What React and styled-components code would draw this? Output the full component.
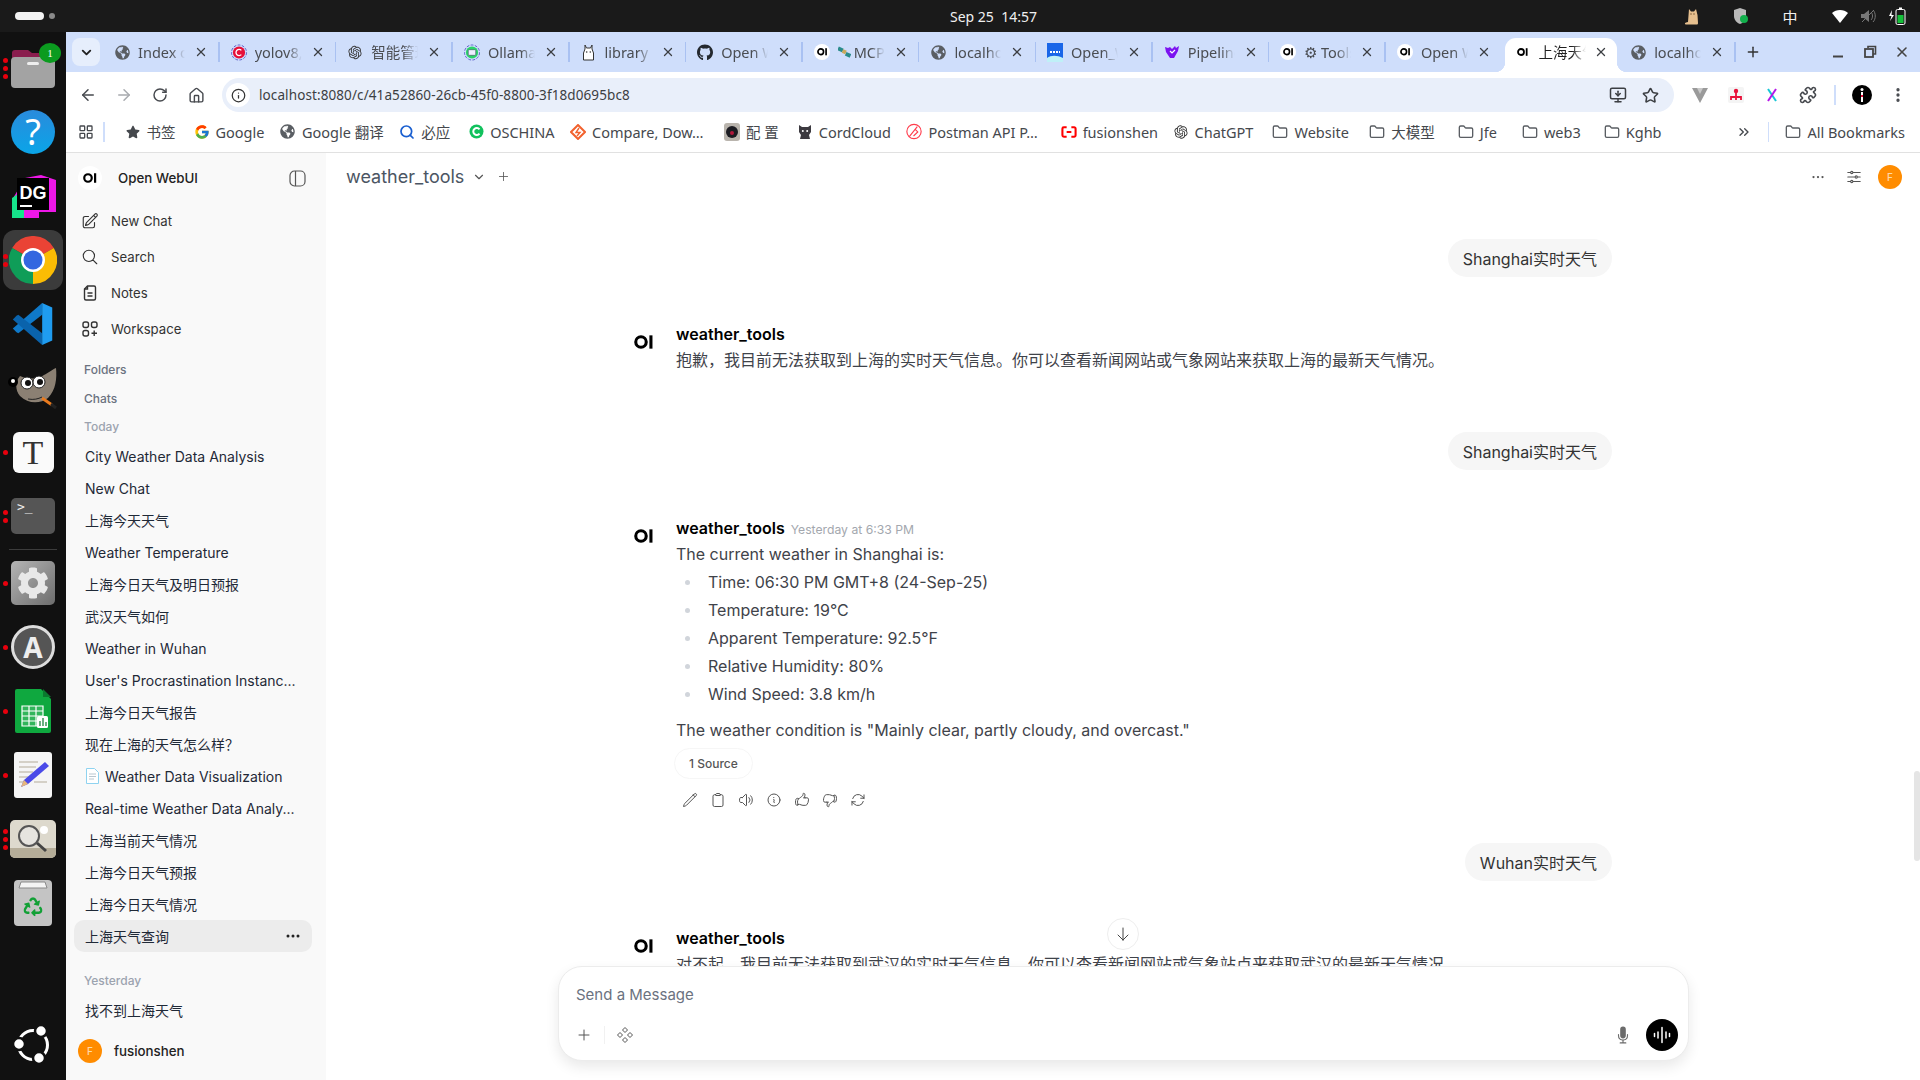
import styled, { createGlobalStyle } from 'styled-components';
import {
  ArrowLeft, ArrowRight, RotateCw, Home, Info, Star, X, Plus, Folder, LayoutGrid,
  MonitorDown, Puzzle, EllipsisVertical, ChevronDown, ChevronsRight, Search as SearchGlyph,
} from 'lucide-react';
import {
  HiOutlinePencilSquare, HiOutlineMagnifyingGlass, HiOutlinePencil, HiOutlineClipboard,
  HiOutlineSpeakerWave, HiOutlineInformationCircle, HiOutlineHandThumbUp, HiOutlineHandThumbDown,
  HiOutlineArrowPath, HiOutlineArrowDown, HiOutlineAdjustmentsHorizontal, HiEllipsisHorizontal,
  HiMicrophone, HiOutlinePlus,
} from 'react-icons/hi2';
import { FaGlobeAmericas, FaGithub, FaCog, FaRecycle, FaStar } from 'react-icons/fa';
import { FcGoogle } from 'react-icons/fc';
import { RiOpenaiFill } from 'react-icons/ri';

const chromeFont = `"Noto Sans", "Noto Sans CJK SC", sans-serif`;
const webFont = `Inter, "Noto Sans CJK SC", sans-serif`;

const GlobalStyle = createGlobalStyle`
  html, body { margin: 0; padding: 0; height: 100%; overflow: hidden; background: #111; }
  #root { height: 100%; }
  * { box-sizing: border-box; }
`;

const Desktop = styled.div`
  width: 1920px;
  height: 1080px;
  display: flex;
  flex-direction: column;
  overflow: hidden;
`;

/* gnome top bar */
const TopBar = styled.header`
  height: 32px;
  flex: none;
  background: #1a1a1a;
  display: grid;
  grid-template-columns: 950px auto 1fr;
  align-items: center;
  font-family: ${chromeFont};
  color: #f0f0f0;
`;
const Activities = styled.div`
  display: flex;
  align-items: center;
  gap: 5px;
  padding-left: 15px;
`;
const ActivityPill = styled.span`
  width: 29px;
  height: 8px;
  border-radius: 4px;
  background: #f2f2f2;
`;
const ActivityDot = styled.span`
  width: 6px;
  height: 6px;
  border-radius: 50%;
  background: #8a8a8a;
`;
const Clock = styled.div`
  font-size: 14px;
  white-space: pre;
`;
const Tray = styled.div`
  display: flex;
  align-items: center;
  justify-content: flex-end;
  padding-right: 10px;
`;
const TraySlot = styled.span`
  width: ${({ $w }) => $w}px;
  display: flex;
  justify-content: center;
  align-items: center;
  font-size: 15px;
  font-family: "Noto Sans CJK SC", sans-serif;
`;

const Body = styled.div`
  flex: 1;
  min-height: 0;
  display: flex;
`;

/* ubuntu dock */
const Dock = styled.nav`
  width: 66px;
  flex: none;
  background: #111;
  display: flex;
  flex-direction: column;
  padding: 4px 0 3px;
`;
const DockSlot = styled.div`
  position: relative;
  height: 64px;
  flex: none;
  display: flex;
  align-items: center;
  justify-content: center;
  margin-top: ${({ $bottom }) => ($bottom ? 'auto' : '0')};
`;
const DockActive = styled.div`
  width: 60px;
  height: 60px;
  border-radius: 12px;
  background: #3b3b3b;
  display: flex;
  align-items: center;
  justify-content: center;
`;
const DockDots = styled.div`
  position: absolute;
  left: 3px;
  top: 0;
  bottom: 0;
  display: flex;
  flex-direction: column;
  justify-content: center;
  gap: 3px;
`;
const DockDot = styled.span`
  width: 5px;
  height: 5px;
  border-radius: 50%;
  background: #e8000d;
`;
const DockRule = styled.div`
  height: 1px;
  margin: 1px 9px 1px;
  flex: none;
  background: #3c3c3c;
`;
const HelpIcon = styled.div`
  width: 44px;
  height: 44px;
  border-radius: 50%;
  background: linear-gradient(#2a8bdc, #0aa5e8);
  color: #fff;
  font: 400 36px/44px ${chromeFont};
  text-align: center;
`;
const TypeIcon = styled.div`
  width: 41px;
  height: 41px;
  border-radius: 6px;
  background: #fafafa;
  color: #333;
  font: 400 34px/41px "Liberation Serif", serif;
  text-align: center;
`;
const TerminalIcon = styled.div`
  width: 44px;
  height: 36px;
  border-radius: 5px;
  background: #555;
  color: #eee;
  padding: 1px 6px;
  font: 400 13px/16px "DejaVu Sans Mono", monospace;
`;
const SettingsIcon = styled.div`
  width: 44px;
  height: 44px;
  border-radius: 5px;
  background: linear-gradient(135deg, #b5b5b5, #6d6d6d);
  color: #e8e8e8;
  display: flex;
  align-items: center;
  justify-content: center;
`;
const UpdateIcon = styled.div`
  width: 44px;
  height: 44px;
  border-radius: 50%;
  border: 3px solid #ddd;
  background: #555;
  color: #eee;
  font: 700 28px/38px ${chromeFont};
  text-align: center;
`;

/* browser frame */
const Browser = styled.div`
  flex: 1;
  min-width: 0;
  display: flex;
  flex-direction: column;
  font-family: ${chromeFont};
  background: #fff;
`;
const TabStrip = styled.div`
  height: 40px;
  flex: none;
  background: #cfdefb;
  display: flex;
  align-items: flex-end;
  padding: 0 10px 0 6px;
`;
const TabListBtn = styled.div`
  width: 28px;
  height: 28px;
  margin: 0 3px 6px 0;
  border-radius: 8px;
  background: #e6eefc;
  display: flex;
  align-items: center;
  justify-content: center;
  color: #222;
`;
const TabRow = styled.div`
  display: flex;
  width: 1633px;
  flex: none;
`;
const TabItem = styled.div`
  position: relative;
  flex: none;
  width: ${({ $active }) => ($active ? '112.64px' : '116.64px')};
  height: 34px;
  display: flex;
  align-items: center;
  padding: 0 0 6px ${({ $active }) => ($active ? '10px' : '11px')};
  color: ${({ $active }) => ($active ? '#1f1f1f' : '#4a4d52')};
  background: ${({ $active }) => ($active ? '#fff' : 'transparent')};
  border-radius: ${({ $active }) => ($active ? '11px 11px 0 0' : '0')};
  margin: ${({ $active }) => ($active ? '0 2px' : '0')};
  &::after {
    content: '';
    position: absolute;
    right: 0;
    top: 4px;
    height: 20px;
    width: 1.5px;
    background: ${({ $sep }) => ($sep ? '#a9c1f2' : 'transparent')};
  }
  ${({ $active }) => $active && `
    &::before {
      content: '';
      position: absolute;
      left: -10px;
      bottom: 0;
      width: 10px;
      height: 10px;
      background: radial-gradient(circle at 0 0, transparent 10px, #fff 10.5px);
    }
    &::after {
      right: -10px;
      top: auto;
      bottom: 0;
      width: 10px;
      height: 10px;
      background: radial-gradient(circle at 100% 0, transparent 10px, #fff 10.5px);
    }
  `}
`;
const TabIconBox = styled.span`
  width: 16px;
  height: 16px;
  flex: none;
  display: flex;
  align-items: center;
  justify-content: center;
  color: #3c3f43;
`;
const TabTitle = styled.span`
  width: 47px;
  margin-left: 8px;
  flex: none;
  overflow: hidden;
  white-space: nowrap;
  font-size: 14.5px;
  line-height: 20px;
  display: flex;
  align-items: center;
  gap: 3px;
  -webkit-mask-image: linear-gradient(90deg, #000 70%, transparent 100%);
  mask-image: linear-gradient(90deg, #000 70%, transparent 100%);
`;
const TabClose = styled.span`
  position: absolute;
  left: ${({ $active }) => ($active ? '89px' : '91px')};
  top: 7px;
  display: flex;
  color: #3c3f43;
`;
const NewTab = styled.div`
  margin: 0 0 12px 9px;
  color: #333;
  display: flex;
`;
const WindowControls = styled.div`
  margin: 0 0 12px auto;
  display: flex;
  gap: 16px;
  color: #444;
`;

const Toolbar = styled.div`
  height: 40px;
  flex: none;
  display: flex;
  align-items: flex-end;
  padding: 0 4px;
  background: #fff;
`;
const ToolBtn = styled.div`
  width: 36px;
  height: 34px;
  flex: none;
  display: flex;
  align-items: center;
  justify-content: center;
  color: ${({ $dim }) => ($dim ? '#a8abaf' : '#474a4f')};
`;
const UrlBar = styled.div`
  flex: 1;
  height: 34px;
  margin: 0 8px;
  padding: 0 8px 0 4px;
  border-radius: 17px;
  background: #e9effa;
  display: flex;
  align-items: center;
`;
const UrlInfo = styled.span`
  width: 24px;
  height: 24px;
  border-radius: 50%;
  background: #fff;
  color: #333;
  display: flex;
  align-items: center;
  justify-content: center;
`;
const UrlText = styled.span`
  margin-left: 9px;
  flex: 1;
  font-size: 13.5px;
  color: #3c3f43;
  letter-spacing: 0.1px;
`;
const UrlAction = styled.span`
  width: 32px;
  display: flex;
  justify-content: center;
  color: #3c3f43;
`;
const ToolRule = styled.span`
  width: 18px;
  height: 34px;
  flex: none;
  display: flex;
  justify-content: center;
  align-items: center;
  &::after {
    content: '';
    width: 1.5px;
    height: 20px;
    background: #cfdefb;
  }
`;
const ProfileDot = styled.span`
  width: 20px;
  height: 20px;
  border-radius: 50%;
  background: #000;
  display: flex;
  align-items: center;
  justify-content: center;
`;

const BookmarkBar = styled.div`
  height: 41px;
  flex: none;
  border-bottom: 1px solid #e1e1e1;
  display: flex;
  align-items: center;
  padding: 0 15px 1px 12px;
  color: #45484d;
  font-size: 14.5px;
`;
const BarRule = styled.span`
  width: 1.5px;
  height: 20px;
  background: #cfdefb;
  margin: ${({ $m }) => $m};
  flex: none;
`;
const Bookmark = styled.div`
  display: flex;
  align-items: center;
  gap: 6px;
  margin-right: ${({ $gap }) => $gap}px;
  white-space: nowrap;
  flex: none;
`;
const BookmarkIcon = styled.span`
  width: 16px;
  height: 16px;
  display: flex;
  align-items: center;
  justify-content: center;
  color: #5a5e63;
  flex: none;
`;
const BarEnd = styled.div`
  margin-left: auto;
  display: flex;
  align-items: center;
`;

/* open webui page */
const Page = styled.div`
  flex: 1;
  min-height: 0;
  display: flex;
  font-family: ${webFont};
`;
const Sidebar = styled.aside`
  width: 260px;
  flex: none;
  background: #f9f9f9;
  display: flex;
  flex-direction: column;
  overflow: hidden;
`;
const SideHead = styled.div`
  height: 50px;
  flex: none;
  display: flex;
  align-items: center;
  padding: 0 20px 0 12px;
`;
const BrandName = styled.span`
  margin-left: 16px;
  flex: 1;
  font-size: 13.3px;
  font-weight: 500;
  color: #222;
`;
const LogoDisc = styled.span`
  width: 24px;
  height: 24px;
  border-radius: 50%;
  background: #fff;
  display: flex;
  align-items: center;
  justify-content: center;
`;
const NavRow = styled.div`
  height: 36px;
  flex: none;
  display: flex;
  align-items: center;
  gap: 12px;
  padding-left: 15px;
  font-size: 13.2px;
  color: #333;
`;
const SideLabel = styled.div`
  height: ${({ $h }) => $h}px;
  flex: none;
  margin-top: ${({ $mt }) => $mt ?? 0}px;
  padding-left: 18px;
  display: flex;
  align-items: center;
  font-size: 12px;
  font-weight: 500;
  color: ${({ $soft }) => ($soft ? '#9ca3af' : '#6b7280')};
`;
const ChatList = styled.div`
  flex: 1;
  min-height: 0;
  overflow: hidden;
`;
const ChatRow = styled.div`
  height: 32px;
  margin: 0 14px 0 8px;
  padding: 0 12px 0 11px;
  display: flex;
  align-items: center;
  justify-content: space-between;
  border-radius: 10px;
  background: ${({ $active }) => ($active ? '#ececec' : 'transparent')};
  font-size: 14px;
  color: #1f2937;
  white-space: nowrap;
`;
const ChatTitle = styled.span`
  display: flex;
  align-items: center;
  gap: 5px;
`;
const UserRow = styled.div`
  height: 58px;
  flex: none;
  background: #f9f9f9;
  display: flex;
  align-items: center;
  gap: 12px;
  padding-left: 12px;
  font-size: 13.3px;
  font-weight: 500;
  color: #222;
`;
const Avatar = styled.span`
  width: 24px;
  height: 24px;
  border-radius: 50%;
  background: #ff8c00;
  color: #ffd9a8;
  font-size: 10px;
  font-weight: 500;
  display: flex;
  align-items: center;
  justify-content: center;
  flex: none;
`;

const Main = styled.main`
  position: relative;
  flex: 1;
  min-width: 0;
  display: flex;
  flex-direction: column;
  background: #fff;
  overflow: hidden;
`;
const MainHead = styled.div`
  height: 47px;
  flex: none;
  display: flex;
  align-items: center;
  padding: 0 18px 0 20px;
`;
const ModelName = styled.span`
  font-size: 18px;
  color: #4b5563;
`;
const HeadBtn = styled.span`
  display: flex;
  margin-left: ${({ $ml }) => $ml};
  color: #555;
`;
const Thread = styled.div`
  flex: 1;
  min-height: 0;
  overflow: hidden;
  width: 1024px;
  margin-left: 286px;
  padding: 39px 24px 0;
`;
const UserLine = styled.div`
  display: flex;
  justify-content: flex-end;
  margin-bottom: ${({ $mb }) => $mb}px;
`;
const Bubble = styled.div`
  height: 38px;
  padding: 0 15px;
  border-radius: 19px;
  background: #f6f6f6;
  display: flex;
  align-items: center;
  font-size: 16px;
  color: #333;
`;
const Reply = styled.div`
  display: flex;
  margin-bottom: ${({ $mb }) => $mb}px;
`;
const ReplyLogo = styled.div`
  width: 41px;
  margin-left: -2px;
  margin-right: 1px;
  flex: none;
  padding-top: 11px;
`;
const ReplyBody = styled.div`
  flex: 1;
  min-width: 0;
`;
const ReplyHead = styled.div`
  height: 24px;
  display: flex;
  align-items: center;
  gap: 6px;
`;
const ReplyName = styled.span`
  font-size: 16px;
  font-weight: 600;
  color: #000;
`;
const Stamp = styled.span`
  font-size: 12.2px;
  color: #a3a7ae;
  margin-top: 2px;
`;
const Para = styled.p`
  margin: ${({ $m }) => $m ?? '1px 0 0'};
  font-size: 16px;
  line-height: 26px;
  color: #3f434a;
`;
const Facts = styled.ul`
  margin: 1px 0 0;
  padding: 0;
  list-style: none;
`;
const Fact = styled.li`
  display: flex;
  align-items: center;
  height: 28px;
  font-size: 16px;
  color: #3f434a;
  &::before {
    content: '';
    width: 5px;
    height: 5px;
    border-radius: 50%;
    background: #d1d5db;
    margin: 0 18px 0 9px;
  }
`;
const SourcePill = styled.div`
  display: inline-flex;
  align-items: center;
  height: 31px;
  margin: 5px 0 0 -2px;
  padding: 0 14px;
  border: 1px solid #f6f6f6;
  border-radius: 16px;
  font-size: 12px;
  font-weight: 500;
  color: #555;
`;
const ActionBar = styled.div`
  display: flex;
  gap: 12px;
  margin: 13px 0 0 6px;
  color: #555;
`;
const ScrollThumb = styled.div`
  position: absolute;
  right: 0;
  top: 618px;
  width: 6px;
  height: 90px;
  border-radius: 3px;
  background: #e5e5e5;
`;
const DownBtn = styled.div`
  position: absolute;
  left: 781px;
  top: 765px;
  width: 32px;
  height: 32px;
  border-radius: 50%;
  border: 1px solid #eee;
  background: #fff;
  color: #444;
  display: flex;
  align-items: center;
  justify-content: center;
`;
const Composer = styled.div`
  position: absolute;
  left: 232px;
  bottom: 19px;
  width: 1131px;
  height: 95px;
  border: 1px solid #ececec;
  border-radius: 24px;
  background: #fff;
  box-shadow: 0 6px 14px rgba(0, 0, 0, 0.09);
  padding: 15px 10px 0 17px;
  display: flex;
  flex-direction: column;
`;
const Placeholder = styled.div`
  font-size: 15px;
  line-height: 26px;
  color: #6b7280;
`;
const ComposerRow = styled.div`
  margin-top: 11px;
  display: flex;
  align-items: center;
  height: 32px;
  color: #555;
`;
const ComposerRule = styled.span`
  width: 1px;
  height: 18px;
  background: #f1f1f1;
  margin: 0 11px 0 12px;
`;
const MicBtn = styled.span`
  margin-left: auto;
  margin-right: 14px;
  display: flex;
  color: #6b6b6b;
`;
const VoiceBtn = styled.span`
  width: 32px;
  height: 32px;
  border-radius: 50%;
  background: #000;
  display: flex;
  align-items: center;
  justify-content: center;
`;
const BadgeCount = styled.span`
  position: absolute;
  left: 39px;
  top: 7px;
  width: 22px;
  height: 20px;
  border-radius: 50%;
  background: #0b9b1f;
  color: #fff;
  font-size: 11px;
  display: flex;
  align-items: center;
  justify-content: center;
`;
const BadgeRecycle = styled.span`
  position: absolute;
  left: 50%;
  top: 50%;
  transform: translate(-50%, -30%);
  display: flex;
`;
const SmallDisc = styled(LogoDisc)`
  width: 16px;
  height: 16px;
`;

/* drawings */
const OiMark = ({ size = 14, color = '#000' }) => (
  <svg width={size * 1.4} height={size} viewBox="0 0 28 20" aria-hidden="true">
    <circle cx="10" cy="10" r="7.5" fill="none" stroke={color} strokeWidth="4.4" />
    <rect x="22" y="0.5" width="4.4" height="19" fill={color} />
  </svg>
);
const OiFav = () => (
  <SmallDisc>
    <OiMark size={7.5} />
  </SmallDisc>
);
const Globe = () => <FaGlobeAmericas size={15} color="#5a5e63" />;
const RingFav = ({ fill, children }) => (
  <svg width="17" height="17" viewBox="0 0 17 17" aria-hidden="true">
    <circle cx="8.5" cy="8.5" r="8" fill="none" stroke="#5a57c8" strokeWidth="1" strokeDasharray="3 1.5" />
    <circle cx="8.5" cy="8.5" r="6.5" fill={fill} />
    {children}
  </svg>
);
const YoloFav = () => (
  <RingFav fill="#e6103a">
    <path d="M11 6.2a3.3 3.3 0 1 0 0 4.6" fill="none" stroke="#fff" strokeWidth="1.4" />
  </RingFav>
);
const OllamaFav = () => (
  <RingFav fill="#2bd36a">
    <rect x="4.5" y="5.5" width="8" height="6" rx="1" fill="#eef" stroke="#456" strokeWidth="0.7" />
  </RingFav>
);
const LlamaFav = () => (
  <svg width="15" height="17" viewBox="0 0 15 17" aria-hidden="true">
    <path d="M4 1v4L2.500 9v7h10V9L11 5V1L9.500 4h-4z" fill="#fff" stroke="#333" strokeWidth="1" />
    <circle cx="5.700" cy="8" r=".8" fill="#333" />
    <circle cx="9.300" cy="8" r=".8" fill="#333" />
  </svg>
);
const FluidFav = () => (
  <svg width="16" height="19" viewBox="0 0 16 19" aria-hidden="true">
    <rect width="16" height="19" fill="#1a66e8" />
    <path d="M0 15c4-3 10-3 16 0v4H0z" fill="#bff0f7" />
    <path d="M3 9h10" stroke="#fff" strokeWidth="2" strokeDasharray="2 1" />
  </svg>
);
const PipeFav = () => (
  <svg width="16" height="16" viewBox="0 0 16 16" aria-hidden="true">
    <path d="M1 3l3 1 2-1 2 2 3-3 1 2 3-2-1 5-4 7H6L2 8z" fill="#7c13f0" />
    <path d="M6 7l2 2 3-3" fill="none" stroke="#fff" strokeWidth="1.200" />
  </svg>
);
const SatGlyph = () => (
  <svg width="17" height="14" viewBox="0 0 17 14" aria-hidden="true">
    <rect x="0" y="1" width="7" height="5" fill="#2a8c8c" transform="rotate(25 3 3)" />
    <rect x="10" y="8" width="7" height="5" fill="#2a8c8c" transform="rotate(25 13 10)" />
    <rect x="6" y="4" width="5" height="5" fill="#c9a95a" transform="rotate(25 8 6)" />
  </svg>
);
const OschinaFav = () => (
  <svg width="15" height="15" viewBox="0 0 15 15" aria-hidden="true">
    <circle cx="7.500" cy="7.500" r="7" fill="#11c15d" />
    <path d="M10.500 5.300a3.500 3.500 0 1 0 0 4.400" fill="none" stroke="#fff" strokeWidth="2" />
  </svg>
);
const CompareFav = () => (
  <svg width="16" height="16" viewBox="0 0 16 16" aria-hidden="true">
    <path d="M8 1l7 7-7 7-7-7z" fill="none" stroke="#f2622e" strokeWidth="2" />
    <path d="M9 4L6 8.500h4L7 12" fill="none" stroke="#f2622e" strokeWidth="1.400" />
  </svg>
);
const LensFav = () => (
  <svg width="16" height="18" viewBox="0 0 16 18" aria-hidden="true">
    <rect width="16" height="18" rx="3" fill="#b9b4ad" />
    <circle cx="8" cy="9" r="6" fill="#1c1c22" />
    <circle cx="8" cy="10" r="2" fill="#b2183c" />
  </svg>
);
const CatFav = () => (
  <svg width="16" height="16" viewBox="0 0 16 16" aria-hidden="true">
    <path d="M2 1l3 2h6l3-2v7l-2 3 1 4H3l1-4-2-3z" fill="#3c3a40" />
    <circle cx="5.800" cy="7" r="1" fill="#fff" />
    <circle cx="10.200" cy="7" r="1" fill="#fff" />
  </svg>
);
const PostmanFav = () => (
  <svg width="17" height="17" viewBox="0 0 17 17" aria-hidden="true">
    <circle cx="8.500" cy="8.500" r="7.600" fill="none" stroke="#ff3c4c" strokeWidth="1.200" />
    <path d="M3.500 14L12 3.300M9.500 6l3 3-4.500 4.300" fill="none" stroke="#ff3c4c" strokeWidth="1.200" />
  </svg>
);
const AliFav = () => (
  <svg width="17" height="14" viewBox="0 0 17 14" aria-hidden="true">
    <path d="M6 2H3a1.500 1.500 0 0 0-1.500 1.500v7A1.500 1.500 0 0 0 3 12h3M11 2h3a1.500 1.500 0 0 1 1.500 1.500v7A1.500 1.500 0 0 1 14 12h-3M6 7h5" fill="none" stroke="#f00" strokeWidth="2.200" />
  </svg>
);

const FilesIcon = () => (
  <svg width="46" height="42" viewBox="0 0 46 42" aria-hidden="true">
    <path d="M2 6a3 3 0 0 1 3-3h13l4 3h20a3 3 0 0 1 3 3v8H2z" fill="#8a1d4e" />
    <rect x="1" y="10" width="44" height="31" rx="4" fill="#a3a3a3" />
    <rect x="17" y="15" width="12" height="3" rx="1.500" fill="#eee" />
  </svg>
);
const DataGripIcon = () => (
  <svg width="48" height="44" viewBox="0 0 48 44" aria-hidden="true">
    <path d="M3 26L16 4l16 -3 15 5v32H30v6H3z" fill="#ee17e8" />
    <path d="M3 24L15 16v28H3z" fill="#16e38a" />
    <rect x="8" y="4" width="32" height="32" fill="#000" />
    <text x="24" y="25" textAnchor="middle" fontFamily="Liberation Sans" fontWeight="700" fontSize="18" fill="#fff">DG</text>
    <rect x="11" y="31" width="12" height="2" fill="#fff" />
  </svg>
);
const ChromeIcon = () => (
  <svg width="48" height="48" viewBox="0 0 48 48" aria-hidden="true">
    <path d="M24 24L3.200 12A24 24 0 0 1 44.800 12z" fill="#ea4335" />
    <path d="M24 24L44.800 12A24 24 0 0 1 24 48z" fill="#fbbc04" />
    <path d="M24 24V48A24 24 0 0 1 3.200 12z" fill="#0f9d58" />
    <circle cx="24" cy="24" r="12" fill="#fff" />
    <circle cx="24" cy="24" r="9.500" fill="#3367e0" />
  </svg>
);
const VsCodeIcon = () => (
  <svg width="44" height="44" viewBox="0 0 48 48" aria-hidden="true">
    <path d="M34 1L2 29l4 4 2 1L34 14z" fill="#0f79c9" />
    <path d="M34 47L2 19l4-4 2-1 26 20z" fill="#0a63ac" />
    <path d="M34 1l11 5v36l-11 5z" fill="#1f9cf0" />
  </svg>
);
const GimpIcon = () => (
  <svg width="50" height="44" viewBox="0 0 50 44" aria-hidden="true">
    <path d="M12 10c6 3 18 4 24-1 4-2 9-6 12-7 1 10 0 22-8 30-8 6-20 6-28-2-5-6-5-14 0-20z" fill="#8b8073" />
    <circle cx="5" cy="16" r="5" fill="#000" />
    <circle cx="5" cy="15" r="2" fill="#fff" />
    <circle cx="19" cy="17" r="6" fill="#fff" stroke="#222" />
    <circle cx="20" cy="17" r="3" fill="#111" />
    <circle cx="31" cy="16" r="6" fill="#fff" stroke="#222" />
    <circle cx="32" cy="16" r="3" fill="#111" />
    <path d="M20 33c6 1 10 0 14-2" stroke="#222" fill="none" />
    <path d="M34 32l10 7" stroke="#e87a1e" strokeWidth="3" />
    <path d="M43 38l5 4" stroke="#222" strokeWidth="3" />
  </svg>
);
const CalcIcon = () => (
  <svg width="38" height="46" viewBox="0 0 38 46" aria-hidden="true">
    <path d="M3 1h24l10 10v32a2 2 0 0 1-2 2H3a2 2 0 0 1-2-2V3a2 2 0 0 1 2-2z" fill="#0fa83f" />
    <path d="M29 1l8 8h-8z" fill="#0a7a2e" />
    <path d="M8 18h21v20H8zM8 23h21M8 28h21M8 33h21M15 18v20M22 18v20" fill="#fff" fillOpacity=".15" stroke="#fff" strokeWidth="1.200" />
    <rect x="23" y="28" width="11" height="12" rx="1.500" fill="#fff" />
    <path d="M26 38v-5M29 38v-8M32 38v-4" stroke="#0a7a2e" strokeWidth="1.200" />
  </svg>
);
const WriterIcon = () => (
  <svg width="38" height="46" viewBox="0 0 38 46" aria-hidden="true">
    <rect x="0" y="0" width="38" height="46" rx="3" fill="#f5f5f5" />
    <path d="M5 10h19M5 15h17M5 20h14M5 25h11M5 30h8M20 30h13" stroke="#c9c4b8" strokeWidth="1.600" />
    <path d="M31 10l4 4-21 18-7 3 3-7z" fill="#4a4ae8" />
    <path d="M7 35l3-7 4 4z" fill="#e7b77a" />
  </svg>
);
const ViewerIcon = () => (
  <svg width="46" height="38" viewBox="0 0 46 38" aria-hidden="true">
    <rect width="46" height="38" rx="5" fill="#ddd9cd" />
    <path d="M0 28h46v5a5 5 0 0 1-5 5H5a5 5 0 0 1-5-5z" fill="#b5ad99" />
    <circle cx="34" cy="10" r="4" fill="#fff" />
    <circle cx="19" cy="16" r="10" fill="#e6e4df" stroke="#555" strokeWidth="2" />
    <path d="M27 23l9 8" stroke="#444" strokeWidth="3" />
  </svg>
);
const TrashIcon = () => (
  <svg width="38" height="46" viewBox="0 0 38 46" aria-hidden="true">
    <rect width="38" height="46" rx="4" fill="#c4c4c4" />
    <path d="M5 8l2-6h24l2 6z" fill="#f4f4f4" stroke="#8a8a8a" />
  </svg>
);
const UbuntuIcon = () => (
  <svg width="38" height="38" viewBox="0 0 38 38" aria-hidden="true">
    <circle cx="19" cy="19" r="14.500" fill="none" stroke="#fff" strokeWidth="3" />
    <circle cx="5" cy="18" r="6" fill="#fff" stroke="#111" strokeWidth="2.500" />
    <circle cx="27" cy="5" r="6" fill="#fff" stroke="#111" strokeWidth="2.500" />
    <circle cx="25" cy="32" r="6" fill="#fff" stroke="#111" strokeWidth="2.500" />
  </svg>
);

const CatTray = () => (
  <svg width="17" height="17" viewBox="0 0 17 17" aria-hidden="true">
    <path d="M5 1l2 2.500h3L12 1l1.500 6 .5 8c0 1-.5 1.500-1.500 1.500H2C.5 16.500.5 15 2 14.500l2-.5z" fill="#e6bf8e" />
    <circle cx="7" cy="6" r=".7" fill="#6b4a2a" />
    <circle cx="10" cy="6" r=".7" fill="#6b4a2a" />
  </svg>
);
const ShieldTray = () => (
  <svg width="16" height="18" viewBox="0 0 16 18" aria-hidden="true">
    <path d="M7 1l6 2v6c0 4-3 7-6 8-3-1-6-4-6-8V3z" fill="#b9b9b9" />
    <circle cx="11" cy="12" r="4" fill="#12b04c" />
  </svg>
);
const WifiTray = () => (
  <svg width="16" height="14" viewBox="0 0 16 14" aria-hidden="true">
    <path d="M0 4c4-4 12-4 16 0l-8 10z" fill="#fff" />
  </svg>
);
const MuteTray = () => (
  <svg width="16" height="16" viewBox="0 0 16 16" aria-hidden="true">
    <path d="M1 6h3l5-4v12l-5-4H1z" fill="#777" />
    <path d="M11 4c2 2 2 6 0 8M13 2c3 3 3 9 0 12M2 14L14 2" stroke="#777" fill="none" />
  </svg>
);
const BatteryTray = () => (
  <svg width="18" height="18" viewBox="0 0 18 18" aria-hidden="true">
    <path d="M4 3L1 9h2.500L2 14l4-6H3.500z" fill="#fff" />
    <rect x="8" y="2.500" width="9" height="15" rx="1.500" fill="none" stroke="#fff" />
    <rect x="11" y="0.500" width="3" height="2" fill="#fff" />
    <rect x="9.500" y="8" width="6" height="8" fill="#15c03a" />
  </svg>
);

const MinimizeGlyph = () => (
  <svg width="16" height="16" viewBox="0 0 16 16" aria-hidden="true">
    <path d="M3 12.500h10" stroke="#444" strokeWidth="2" />
  </svg>
);
const RestoreGlyph = () => (
  <svg width="16" height="16" viewBox="0 0 16 16" aria-hidden="true">
    <path d="M6 4V2.500h7.500V10H11" fill="none" stroke="#444" strokeWidth="1.600" />
    <rect x="3" y="5" width="8" height="8" fill="none" stroke="#444" strokeWidth="1.800" />
  </svg>
);

const TriExt = () => (
  <svg width="18" height="18" viewBox="0 0 18 18" aria-hidden="true">
    <path d="M1 2h16L9 17z" fill="#9a9a9a" />
    <path d="M6 2h6L9 8z" fill="#c9c9c9" />
  </svg>
);
const TreeExt = () => (
  <svg width="16" height="16" viewBox="0 0 16 16" aria-hidden="true">
    <rect width="16" height="16" rx="2" fill="#f4f4f4" />
    <circle cx="8" cy="4" r="2.200" fill="#e8113a" />
    <path d="M8 6v4M3 13v-3h10v3M8 10v3" stroke="#e8113a" strokeWidth="1.800" fill="none" />
  </svg>
);
const XExt = () => (
  <svg width="14" height="16" viewBox="0 0 14 16" aria-hidden="true">
    <path d="M3 2l8 12" stroke="#16c6d6" strokeWidth="2" />
    <path d="M11 2L3 14" stroke="#b516e8" strokeWidth="2" />
  </svg>
);
const OiTorch = () => (
  <svg width="6" height="16" viewBox="0 0 6 16" aria-hidden="true">
    <circle cx="3" cy="2.500" r="1.500" fill="#fff" />
    <rect x="2" y="5" width="2" height="10" fill="#fff" />
    <rect x="2" y="8" width="2" height="2" fill="#e8113a" />
  </svg>
);

const SidebarToggle = () => (
  <svg width="17" height="17" viewBox="0 0 17 17" aria-hidden="true">
    <rect x="1" y="1" width="15" height="15" rx="4.500" fill="none" stroke="#555" strokeWidth="1.200" />
    <path d="M6.500 1v15" stroke="#555" strokeWidth="1.200" />
  </svg>
);
const NotesIcon = () => (
  <svg width="18" height="18" viewBox="0 0 18 18" aria-hidden="true">
    <path d="M6.500 2H13a1.500 1.500 0 0 1 1.500 1.500v11A1.500 1.500 0 0 1 13 16H5a1.500 1.500 0 0 1-1.500-1.500V5z" fill="none" stroke="#333" strokeWidth="1.400" />
    <path d="M6.500 2v3h-3M6.500 9h5M6.500 12h5" fill="none" stroke="#333" strokeWidth="1.400" />
  </svg>
);
const WorkspaceIcon = () => (
  <svg width="18" height="18" viewBox="0 0 18 18" aria-hidden="true">
    <g fill="none" stroke="#333" strokeWidth="1.400">
      <rect x="2" y="2" width="5.500" height="5.500" rx="2" />
      <rect x="10.500" y="2" width="5.500" height="5.500" rx="2" />
      <rect x="2" y="10.500" width="5.500" height="5.500" rx="2" />
      <path d="M13.200 10.500v5.500M10.500 13.200H16" />
    </g>
  </svg>
);
const DocEmoji = () => (
  <svg width="15" height="16" viewBox="0 0 15 16" aria-hidden="true">
    <path d="M1.500 .5h8l4 4v11h-12z" fill="#fff" stroke="#8fd3f0" />
    <path d="M4 6h7M4 8.500h7M4 11h5" stroke="#b9c6cf" />
  </svg>
);
const RowDots = () => (
  <svg width="14" height="4" viewBox="0 0 14 4" aria-hidden="true">
    <circle cx="2" cy="2" r="1.500" fill="#222" />
    <circle cx="7" cy="2" r="1.500" fill="#222" />
    <circle cx="12" cy="2" r="1.500" fill="#222" />
  </svg>
);
const ToolsIcon = () => (
  <svg width="18" height="18" viewBox="0 0 18 18" aria-hidden="true">
    <g fill="none" stroke="#555" strokeWidth="1">
      <path d="M9 1.500l2.500 2.500L9 6.500 6.500 4z" />
      <path d="M4 6.500L6.500 9 4 11.500 1.500 9z" />
      <path d="M14 6.500L16.500 9 14 11.500 11.500 9z" />
      <path d="M9 11.500l2.500 2.500L9 16.500 6.500 14z" />
    </g>
  </svg>
);
const VoiceBars = () => (
  <svg width="18" height="18" viewBox="0 0 18 18" aria-hidden="true">
    <path d="M1.500 7.500v3M5 6v6M9 1.500v15M13 6v6M16.500 7.500v3" stroke="#fff" strokeWidth="1.500" strokeLinecap="round" />
  </svg>
);

const tabs = [
  { title: 'Index of', icon: <Globe /> },
  { title: 'yolov8,', icon: <YoloFav /> },
  { title: '智能管理', icon: <RiOpenaiFill size={17} color="#333" /> },
  { title: 'Ollama', icon: <OllamaFav /> },
  { title: 'library', icon: <LlamaFav /> },
  { title: 'Open WebUI', icon: <FaGithub size={17} color="#24292f" /> },
  { title: 'MCP', icon: <OiFav />, glyph: <SatGlyph /> },
  { title: 'localhost', icon: <Globe /> },
  { title: 'Open_WebUI', icon: <FluidFav /> },
  { title: 'Pipelines', icon: <PipeFav /> },
  { title: '⚙ Tools', icon: <OiFav /> },
  { title: 'Open WebUI', icon: <OiFav /> },
  { title: '上海天气', icon: <OiMark size={8} />, active: true },
  { title: 'localhost', icon: <Globe /> },
];

const bookmarks = [
  { label: '书签', gap: 18, icon: <FaStar size={14} color="#45484d" /> },
  { label: 'Google', gap: 15.5, icon: <FcGoogle size={16} /> },
  { label: 'Google 翻译', gap: 15.5, icon: <Globe /> },
  { label: '必应', gap: 18, icon: <SearchGlyph size={16} color="#1a5fd0" strokeWidth={2.6} /> },
  { label: 'OSCHINA', gap: 15.5, icon: <OschinaFav /> },
  { label: 'Compare, Dow…', gap: 20.5, icon: <CompareFav /> },
  { label: '配 置', gap: 18, icon: <LensFav /> },
  { label: 'CordCloud', gap: 15.5, icon: <CatFav /> },
  { label: 'Postman API P…', gap: 23, icon: <PostmanFav /> },
  { label: 'fusionshen', gap: 14.5, icon: <AliFav /> },
  { label: 'ChatGPT', gap: 19, icon: <RiOpenaiFill size={16} color="#333" /> },
  { label: 'Website', gap: 20.5 },
  { label: '大模型', gap: 23 },
  { label: 'Jfe', gap: 25 },
  { label: 'web3', gap: 23 },
  { label: 'Kghb', gap: 0 },
];

const todayChats = [
  'City Weather Data Analysis', 'New Chat', '上海今天天气', 'Weather Temperature', '上海今日天气及明日预报',
  '武汉天气如何', 'Weather in Wuhan', "User's Procrastination Instanc...", '上海今日天气报告', '现在上海的天气怎么样？',
  'Weather Data Visualization', 'Real-time Weather Data Analy...', '上海当前天气情况', '上海今日天气预报', '上海今日天气情况',
];

const facts = [
  'Time: 06:30 PM GMT+8 (24-Sep-25)', 'Temperature: 19°C', 'Apparent Temperature: 92.5°F',
  'Relative Humidity: 80%', 'Wind Speed: 3.8 km/h',
];

const DockEntry = ({ dots = 0, bottom, children }) => (
  <DockSlot $bottom={bottom}>
    {dots > 0 && (
      <DockDots>
        {Array.from({ length: dots }, (_, i) => <DockDot key={i} />)}
      </DockDots>
    )}
    {children}
  </DockSlot>
);

const OiReply = ({ stamp, mb, children }) => (
  <Reply $mb={mb}>
    <ReplyLogo><OiMark size={14} /></ReplyLogo>
    <ReplyBody>
      <ReplyHead>
        <ReplyName>weather_tools</ReplyName>
        {stamp && <Stamp>{stamp}</Stamp>}
      </ReplyHead>
      {children}
    </ReplyBody>
  </Reply>
);

const App = () => (
  <Desktop>
    <GlobalStyle />
    <TopBar>
      <Activities>
        <ActivityPill />
        <ActivityDot />
      </Activities>
      <Clock>Sep 25  14:57</Clock>
      <Tray>
        <TraySlot $w={76}><CatTray /></TraySlot>
        <TraySlot $w={22}><ShieldTray /></TraySlot>
        <TraySlot $w={76}>中</TraySlot>
        <TraySlot $w={24}><WifiTray /></TraySlot>
        <TraySlot $w={32}><MuteTray /></TraySlot>
        <TraySlot $w={26}><BatteryTray /></TraySlot>
      </Tray>
    </TopBar>
    <Body>
      <Dock>
        <DockEntry dots={3}><FilesIcon /><BadgeCount>1</BadgeCount></DockEntry>
        <DockEntry><HelpIcon>?</HelpIcon></DockEntry>
        <DockEntry><DataGripIcon /></DockEntry>
        <DockEntry dots={2}><DockActive><ChromeIcon /></DockActive></DockEntry>
        <DockEntry><VsCodeIcon /></DockEntry>
        <DockEntry><GimpIcon /></DockEntry>
        <DockEntry dots={1}><TypeIcon>T</TypeIcon></DockEntry>
        <DockEntry dots={2}><TerminalIcon>&gt;_</TerminalIcon></DockEntry>
        <DockRule />
        <DockEntry dots={1}><SettingsIcon><FaCog size={32} /></SettingsIcon></DockEntry>
        <DockEntry dots={1}><UpdateIcon>A</UpdateIcon></DockEntry>
        <DockEntry dots={1}><CalcIcon /></DockEntry>
        <DockEntry dots={1}><WriterIcon /></DockEntry>
        <DockEntry dots={3}><ViewerIcon /></DockEntry>
        <DockEntry>
          <TrashIcon />
          <BadgeRecycle><FaRecycle size={19} color="#12a036" /></BadgeRecycle>
        </DockEntry>
        <DockEntry bottom><UbuntuIcon /></DockEntry>
      </Dock>
      <Browser>
        <TabStrip>
          <TabListBtn><ChevronDown size={15} strokeWidth={3} /></TabListBtn>
          <TabRow>
            {tabs.map((tab, i) => {
              const nextActive = tabs[i + 1]?.active;
              return (
                <TabItem key={i} $active={tab.active} $sep={!tab.active && !nextActive}>
                  <TabIconBox>{tab.icon}</TabIconBox>
                  <TabTitle>{tab.glyph}{tab.title}</TabTitle>
                  <TabClose $active={tab.active}><X size={14} strokeWidth={2.2} /></TabClose>
                </TabItem>
              );
            })}
          </TabRow>
          <NewTab><Plus size={16} strokeWidth={2.2} /></NewTab>
          <WindowControls>
            <MinimizeGlyph />
            <RestoreGlyph />
            <X size={16} strokeWidth={2.4} />
          </WindowControls>
        </TabStrip>
        <Toolbar>
          <ToolBtn><ArrowLeft size={18} /></ToolBtn>
          <ToolBtn $dim><ArrowRight size={18} /></ToolBtn>
          <ToolBtn><RotateCw size={16} strokeWidth={2.2} /></ToolBtn>
          <ToolBtn><Home size={17} /></ToolBtn>
          <UrlBar>
            <UrlInfo><Info size={15} /></UrlInfo>
            <UrlText>localhost:8080/c/41a52860-26cb-45f0-8800-3f18d0695bc8</UrlText>
            <UrlAction><MonitorDown size={18} /></UrlAction>
            <UrlAction><Star size={17} strokeWidth={2.2} /></UrlAction>
          </UrlBar>
          <ToolBtn><TriExt /></ToolBtn>
          <ToolBtn><TreeExt /></ToolBtn>
          <ToolBtn><XExt /></ToolBtn>
          <ToolBtn><Puzzle size={18} strokeWidth={2.2} /></ToolBtn>
          <ToolRule />
          <ToolBtn><ProfileDot><OiTorch /></ProfileDot></ToolBtn>
          <ToolBtn><EllipsisVertical size={18} strokeWidth={2.4} /></ToolBtn>
        </Toolbar>
        <BookmarkBar>
          <LayoutGrid size={16} color="#45484d" />
          <BarRule $m="0 20px 0 9px" />
          {bookmarks.map((b) => (
            <Bookmark key={b.label} $gap={b.gap}>
              <BookmarkIcon>{b.icon ?? <Folder size={16} />}</BookmarkIcon>
              {b.label}
            </Bookmark>
          ))}
          <BarEnd>
            <ChevronsRight size={16} />
            <BarRule $m="0 16px" />
            <Bookmark $gap={0}>
              <BookmarkIcon><Folder size={16} /></BookmarkIcon>
              All Bookmarks
            </Bookmark>
          </BarEnd>
        </BookmarkBar>
        <Page>
          <Sidebar>
            <SideHead>
              <LogoDisc><OiMark size={10} /></LogoDisc>
              <BrandName>Open WebUI</BrandName>
              <SidebarToggle />
            </SideHead>
            <NavRow><HiOutlinePencilSquare size={18} />New Chat</NavRow>
            <NavRow><HiOutlineMagnifyingGlass size={18} />Search</NavRow>
            <NavRow><NotesIcon />Notes</NavRow>
            <NavRow><WorkspaceIcon />Workspace</NavRow>
            <SideLabel $h={30} $mt={7}>Folders</SideLabel>
            <SideLabel $h={29}>Chats</SideLabel>
            <SideLabel $h={27} $soft>Today</SideLabel>
            <ChatList>
              {todayChats.map((title) => (
                <ChatRow key={title}>
                  <ChatTitle>
                    {title === 'Weather Data Visualization' && <DocEmoji />}
                    {title}
                  </ChatTitle>
                </ChatRow>
              ))}
              <ChatRow $active>
                <ChatTitle>上海天气查询</ChatTitle>
                <RowDots />
              </ChatRow>
              <SideLabel $h={27} $mt={15} $soft>Yesterday</SideLabel>
              <ChatRow>找不到上海天气</ChatRow>
            </ChatList>
            <UserRow><Avatar>F</Avatar>fusionshen</UserRow>
          </Sidebar>
          <Main>
            <MainHead>
              <ModelName>weather_tools</ModelName>
              <HeadBtn $ml="8px"><ChevronDown size={14} /></HeadBtn>
              <HeadBtn $ml="11px"><HiOutlinePlus size={13} /></HeadBtn>
              <HeadBtn $ml="auto"><HiEllipsisHorizontal size={18} /></HeadBtn>
              <HeadBtn $ml="18px"><HiOutlineAdjustmentsHorizontal size={18} /></HeadBtn>
              <HeadBtn $ml="15px"><Avatar>F</Avatar></HeadBtn>
            </MainHead>
            <Thread>
              <UserLine $mb={45}><Bubble>Shanghai实时天气</Bubble></UserLine>
              <OiReply mb={59}>
                <Para>抱歉，我目前无法获取到上海的实时天气信息。你可以查看新闻网站或气象网站来获取上海的最新天气情况。</Para>
              </OiReply>
              <UserLine $mb={46}><Bubble>Shanghai实时天气</Bubble></UserLine>
              <OiReply stamp="Yesterday at 6:33 PM" mb={35}>
                <Para>The current weather in Shanghai is:</Para>
                <Facts>
                  {facts.map((fact) => <Fact key={fact}>{fact}</Fact>)}
                </Facts>
                <Para $m="9px 0 0">The weather condition is "Mainly clear, partly cloudy, and overcast."</Para>
                <SourcePill>1 Source</SourcePill>
                <ActionBar>
                  <HiOutlinePencil size={16} />
                  <HiOutlineClipboard size={16} />
                  <HiOutlineSpeakerWave size={16} />
                  <HiOutlineInformationCircle size={16} />
                  <HiOutlineHandThumbUp size={16} />
                  <HiOutlineHandThumbDown size={16} />
                  <HiOutlineArrowPath size={16} />
                </ActionBar>
              </OiReply>
              <UserLine $mb={45}><Bubble>Wuhan实时天气</Bubble></UserLine>
              <OiReply mb={0}>
                <Para>对不起，我目前无法获取到武汉的实时天气信息。你可以查看新闻网站或气象站点来获取武汉的最新天气情况。</Para>
              </OiReply>
            </Thread>
            <ScrollThumb />
            <DownBtn><HiOutlineArrowDown size={16} /></DownBtn>
            <Composer>
              <Placeholder>Send a Message</Placeholder>
              <ComposerRow>
                <HiOutlinePlus size={16} />
                <ComposerRule />
                <ToolsIcon />
                <MicBtn><HiMicrophone size={18} /></MicBtn>
                <VoiceBtn><VoiceBars /></VoiceBtn>
              </ComposerRow>
            </Composer>
          </Main>
        </Page>
      </Browser>
    </Body>
  </Desktop>
);

export default App;
